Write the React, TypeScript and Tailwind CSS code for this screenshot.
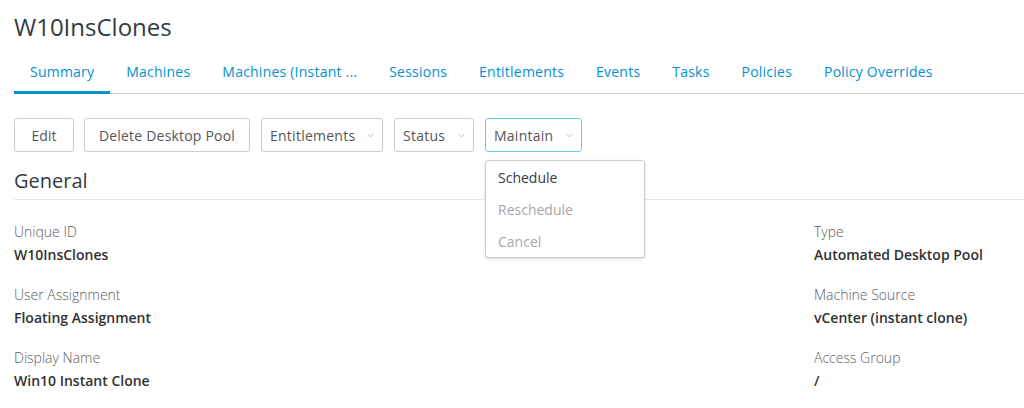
import { ChevronDown } from "lucide-react";

const tabs = [
  "Summary",
  "Machines",
  "Machines (Instant ...",
  "Sessions",
  "Entitlements",
  "Events",
  "Tasks",
  "Policies",
  "Policy Overrides",
];

const left = [
  { label: "Unique ID", value: "W10InsClones" },
  { label: "User Assignment", value: "Floating Assignment" },
  { label: "Display Name", value: "Win10 Instant Clone" },
];

const right = [
  { label: "Type", value: "Automated Desktop Pool" },
  { label: "Machine Source", value: "vCenter (instant clone)" },
  { label: "Access Group", value: "/" },
];

function Field({ label, value }: { label: string; value: string }) {
  return (
    <div className="flex flex-col">
      <span className="text-[14px] leading-[23px] font-light text-[#5e5e5e]">{label}</span>
      <span className="text-[14px] leading-[23px] font-semibold text-[#313131]">{value}</span>
    </div>
  );
}

function DropButton({ label, width, active }: { label: string; width: string; active?: boolean }) {
  return (
    <button
      className={
        "h-[34px] flex items-center justify-between pl-[8px] pr-[6px] rounded-[3px] border bg-white text-[14px] tracking-[0.25px] text-[#565656] " +
        width +
        (active ? " border-[#6ccaf2]" : " border-[#cccccc]")
      }
    >
      <span>{label}</span>
      <ChevronDown className="w-[11px] h-[11px] text-[#9a9a9a]" strokeWidth={1.5} />
    </button>
  );
}

export default function App() {
  return (
    <div
      className="w-[1024px] h-[408px] overflow-hidden bg-white pl-[14px] pt-[10px]"
      style={{ fontFamily: '"Open Sans", "Liberation Sans", sans-serif' }}
    >
      <h1 className="text-[24px] leading-[34px] font-normal text-[#313c45]">W10InsClones</h1>

      {/* Tabs */}
      <div className="mt-[10px] flex border-b border-[#cccccc]">
        {tabs.map((t, i) => (
          <div
            key={t}
            className={
              "px-4 pt-[8px] pb-[9px] text-[14px] leading-[20px] tracking-[0.22px] text-[#0092d1] -mb-px border-b-[3px] " +
              (i === 0 ? "border-[#0092d1]" : "border-transparent")
            }
          >
            {t}
          </div>
        ))}
      </div>

      {/* Action buttons */}
      <div className="mt-[24px] flex gap-[11px]">
        <button className="h-[34px] w-[60px] -mr-px rounded-[3px] border border-[#cccccc] text-[14px] text-[#565656]">
          Edit
        </button>
        <button className="h-[34px] w-[166px] rounded-[3px] border border-[#cccccc] text-[14px] tracking-[0.2px] text-[#565656]">
          Delete Desktop Pool
        </button>
        <DropButton label="Entitlements" width="w-[122px]" />
        <DropButton label="Status" width="w-[80px]" />
        <div className="relative">
          <DropButton label="Maintain" width="w-[97px]" active />
          <div className="absolute left-0 top-[42px] w-[160px] z-10 bg-white border border-[#cccccc] rounded-[3px] shadow-[0_1px_3px_rgba(0,0,0,0.15)] flex flex-col">
            <div className="h-[32px] pl-[12px] flex items-center text-[14px] text-[#313c45]">Schedule</div>
            <div className="h-[32px] pl-[12px] flex items-center text-[14px] text-[#a8a8a8]">Reschedule</div>
            <div className="h-[32px] pl-[12px] flex items-center text-[14px] text-[#a8a8a8]">Cancel</div>
          </div>
        </div>
      </div>

      {/* General */}
      <h2 className="mt-[14px] pb-[3px] text-[20px] leading-[30px] font-normal text-[#313c45] border-b border-[#e8e8e8]">
        General
      </h2>

      <div className="mt-[20px] flex">
        <div className="w-[800px] flex flex-col gap-[17px]">
          {left.map((f) => (
            <Field key={f.label} {...f} />
          ))}
        </div>
        <div className="flex flex-col gap-[17px]">
          {right.map((f) => (
            <Field key={f.label} {...f} />
          ))}
        </div>
      </div>
    </div>
  );
}
